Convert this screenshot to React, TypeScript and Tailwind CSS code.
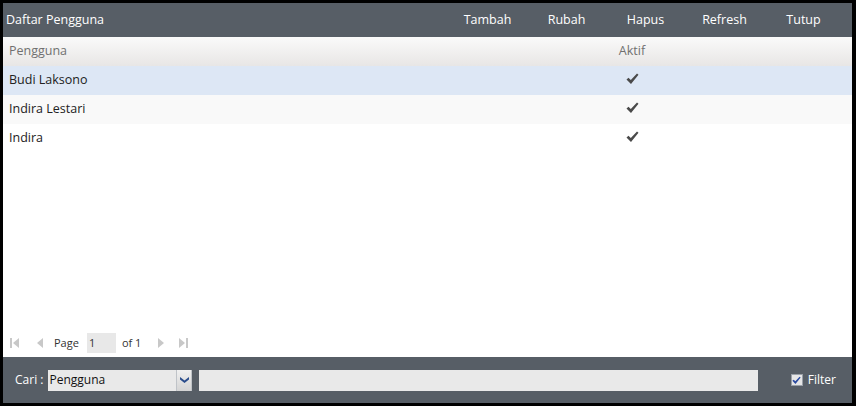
const users = [
  { name: 'Budi Laksono', aktif: true },
  { name: 'Indira Lestari', aktif: true },
  { name: 'Indira', aktif: true },
];

const actions = ['Tambah', 'Rubah', 'Hapus', 'Refresh', 'Tutup'];

function PagerIcon({ dir, end }: { dir: 'left' | 'right'; end?: boolean }) {
  return (
    <svg width="12" height="12" viewBox="0 0 12 12" className="shrink-0">
      {dir === 'left' ? (
        <>
          {end && <rect x="1" y="1" width="2" height="10" fill="#c8c8c8" />}
          <polygon points="10,1 4,6 10,11" fill="#c8c8c8" />
        </>
      ) : (
        <>
          <polygon points="2,1 8,6 2,11" fill="#c8c8c8" />
          {end && <rect x="9" y="1" width="2" height="10" fill="#c8c8c8" />}
        </>
      )}
    </svg>
  );
}

function HeavyCheck({ className }: { className?: string }) {
  return (
    <svg width="13" height="12" viewBox="0 0 13 12" className={className}>
      <path d="M0.5 6.5 L2.5 4.8 L4.8 7 L11 0.5 L12.5 1.8 L5 11 Z" fill="currentColor" />
    </svg>
  );
}

export default function App() {
  return (
    <div
      className="w-[856px] h-[406px] bg-black pt-[3px] pl-[3px] pr-[4px] pb-[3px]"
      style={{ fontFamily: '"Open Sans", "Noto Sans", sans-serif' }}
    >
      <div className="flex flex-col h-full bg-white">
        {/* Header */}
        <div className="flex items-center h-[34px] bg-[#575e66] text-white text-[12.5px] pl-[3px] pr-[9px]">
          <div className="flex-1">Daftar Pengguna</div>
          {actions.map((a) => (
            <div key={a} className="w-[79px] text-center">
              {a}
            </div>
          ))}
        </div>

        {/* Column header */}
        <div className="flex items-center h-[29px] bg-gradient-to-b from-[#fafafa] to-[#e8e6e5] text-[#707070] text-[12.5px]">
          <div className="w-[588px] pl-[6px]">Pengguna</div>
          <div className="w-[82px] text-center">Aktif</div>
        </div>

        {/* Rows */}
        <div className="flex-1">
          {users.map((u, i) => (
            <div
              key={u.name}
              className={`flex items-center h-[29px] text-[12.5px] text-[#222] ${
                i === 0 ? 'bg-[#dde7f5]' : i === 1 ? 'bg-[#f9f9f9]' : 'bg-white'
              }`}
            >
              <div className="w-[588px] pl-[6px]">{u.name}</div>
              <div className="w-[82px] flex justify-center pl-[1px] pb-[3px]">
                {u.aktif && <HeavyCheck className="text-[#4a4a4a]" />}
              </div>
            </div>
          ))}
        </div>

        {/* Pager */}
        <div className="flex items-center h-[24px] pl-[6px] text-[11px] text-[#333] mb-[2px]">
          <PagerIcon dir="left" end />
          <div className="w-[12px]" />
          <PagerIcon dir="left" />
          <span className="ml-[9px]">Page</span>
          <div className="ml-[8px] w-[29px] h-[20px] bg-[#e8e8e8] pl-[2px] flex items-center">1</div>
          <span className="ml-[6px]">of 1</span>
          <div className="ml-[15px]" />
          <PagerIcon dir="right" />
          <div className="w-[9px]" />
          <PagerIcon dir="right" end />
        </div>

        {/* Search bar */}
        <div className="flex items-center h-[46px] bg-[#575e66] text-white text-[12px] pl-[12px] pr-[16px]">
          <span>Cari :</span>
          <div className="ml-[5px] flex h-[21px] w-[144px] bg-[#e9e9e9]">
            <div className="flex-1 text-[#111] pl-[1px] flex items-center text-[12px]">Pengguna</div>
            <div className="w-[16px] bg-gradient-to-b from-[#f0f0f0] to-[#d4d4d4] border-l border-r border-[#bfc3c8] flex items-center justify-center">
              <svg width="9" height="6" viewBox="0 0 9 6">
                <polygon points="0,0 4.5,3.5 9,0 9,2.5 4.5,6 0,2.5" fill="#2b4d8c" />
              </svg>
            </div>
          </div>
          <div className="ml-[7px] h-[21px] flex-1 bg-[#e9e9e9] mr-[33px]" />
          <div className="w-[12px] h-[12px] bg-[#e6e6e6] border border-[#9aa0a8] flex items-center justify-center">
            <HeavyCheck className="w-[9px] h-[9px] text-[#2a4aa0]" />
          </div>
          <span className="ml-[5px]">Filter</span>
        </div>
      </div>
    </div>
  );
}
